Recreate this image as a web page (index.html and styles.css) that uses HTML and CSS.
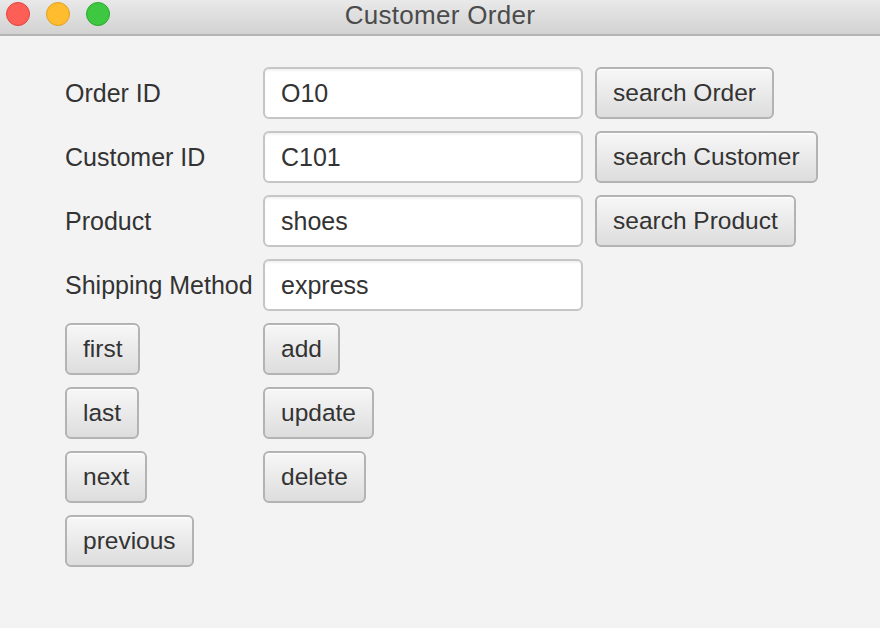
FILE: index.html
```html
<!DOCTYPE html>
<html>
<head>
<meta charset="utf-8">
<link rel="stylesheet" href="styles.css">
</head>
<body>
<div class="window">
  <div class="titlebar">
    <div class="lights">
      <span class="light red"></span>
      <span class="light yellow"></span>
      <span class="light green"></span>
    </div>
    <div class="title">Customer Order</div>
  </div>
  <div class="content">
    <div class="form">
      <div class="label">Order ID</div>
      <div class="field">O10</div>
      <button class="btn">search Order</button>

      <div class="label">Customer ID</div>
      <div class="field">C101</div>
      <button class="btn">search Customer</button>

      <div class="label">Product</div>
      <div class="field">shoes</div>
      <button class="btn">search Product</button>

      <div class="label">Shipping Method</div>
      <div class="field">express</div>
      <div></div>

      <button class="btn">first</button>
      <button class="btn">add</button>
      <div></div>

      <button class="btn">last</button>
      <button class="btn">update</button>
      <div></div>

      <button class="btn">next</button>
      <button class="btn">delete</button>
      <div></div>

      <button class="btn">previous</button>
      <div></div>
      <div></div>
    </div>
  </div>
</div>
</body>
</html>
```
FILE: styles.css
```css
html, body {
  margin: 0;
  padding: 0;
  width: 880px;
  height: 628px;
  overflow: hidden;
  background: #f3f3f3;
  font-family: "Liberation Sans", Arial, sans-serif;
}
.window {
  width: 880px;
  height: 628px;
  display: flex;
  flex-direction: column;
}
.titlebar {
  position: relative;
  height: 34px;
  flex: none;
  background: linear-gradient(to bottom, #e9e9e9, #d2d2d2);
  border-bottom: 2px solid #b4b4b4;
  display: flex;
  align-items: center;
  justify-content: center;
}
.lights {
  position: absolute;
  left: 6px;
  top: 2px;
  display: flex;
  gap: 16px;
}
.light {
  width: 24px;
  height: 24px;
  border-radius: 50%;
  box-sizing: border-box;
  display: block;
}
.red { background: #fd5f57; border: 1px solid #e0443e; }
.yellow { background: #febc2e; border: 1px solid #dea123; }
.green { background: #3ec841; border: 1px solid #2aa82e; }
.title {
  font-size: 26px;
  letter-spacing: 0.3px;
  color: #4b4b4b;
  margin-top: -4px;
}
.content {
  padding: 31px 0 0 65px;
}
.form {
  display: grid;
  grid-template-columns: 186px 320px auto;
  grid-auto-rows: 52px;
  column-gap: 12px;
  row-gap: 12px;
  align-items: center;
  justify-items: start;
  justify-content: start;
}
.label {
  font-size: 25px;
  color: #333;
  white-space: nowrap;
}
.field {
  box-sizing: border-box;
  width: 320px;
  height: 52px;
  background: #fff;
  border: 2px solid #c6c6c6;
  border-radius: 6px;
  padding: 0 16px;
  font-size: 25px;
  color: #333;
  display: flex;
  align-items: center;
  box-shadow: inset 0 2px 2px rgba(0,0,0,0.05);
}
.btn {
  box-sizing: border-box;
  height: 52px;
  font-family: "Liberation Sans", Arial, sans-serif;
  font-size: 24.5px;
  color: #333;
  padding: 0 16px;
  border: 2px solid #b3b3b3;
  border-radius: 6px;
  background: linear-gradient(to bottom, #f7f7f7, #dddddd);
  box-shadow: inset 0 1px 0 #ffffff;
  white-space: nowrap;
  cursor: default;
}
```
